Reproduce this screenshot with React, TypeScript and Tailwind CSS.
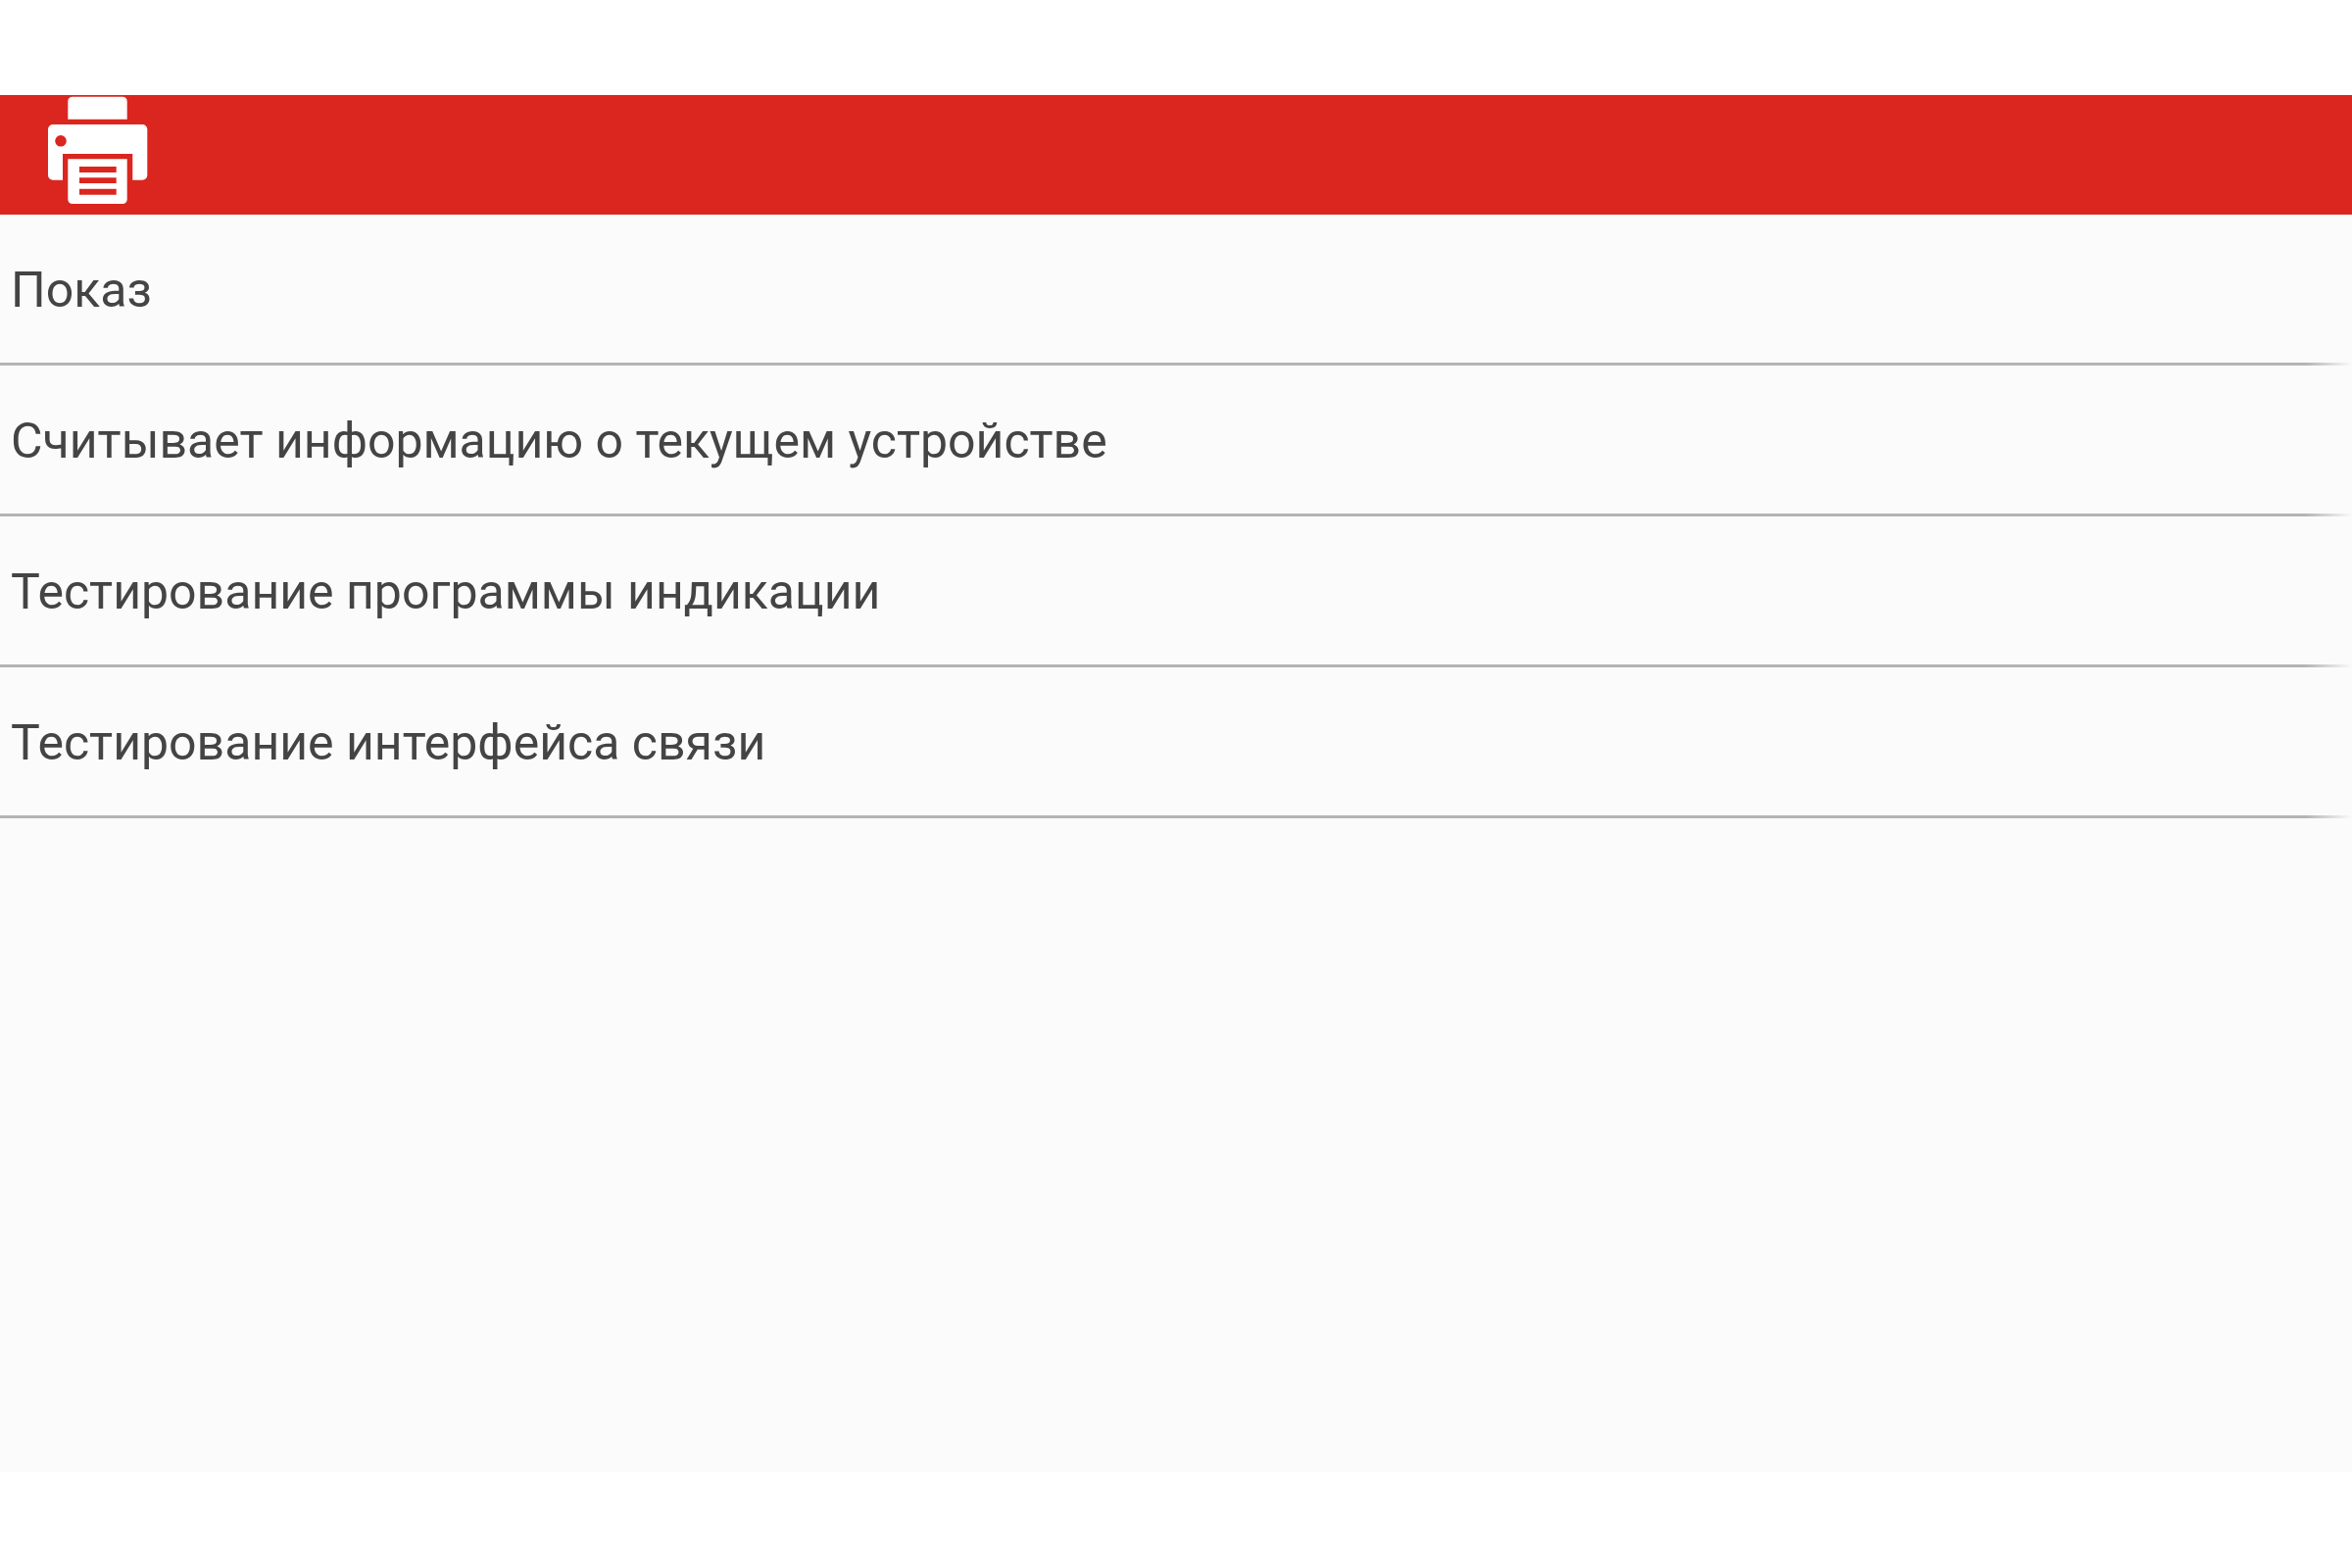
const items = [
  'Показ',
  'Считывает информацию о текущем устройстве',
  'Тестирование программы индикации',
  'Тестирование интерфейса связи',
];

function PrinterIcon() {
  return (
    <svg viewBox="0 0 104 112" className="h-28 w-26" fill="#ffffff" aria-hidden="true">
      <path d="M21.3 24.7V6.2a4.5 4.5 0 0 1 4.5-4.5h51.4a4.5 4.5 0 0 1 4.5 4.5v18.5z" />
      <path
        fillRule="evenodd"
        d="M6 30h91.3a5 5 0 0 1 5 5v46.7a5 5 0 0 1-5 5h-10V60H16v26.7H6a5 5 0 0 1-5-5V35a5 5 0 0 1 5-5zM14 41a5.8 5.8 0 1 0 0 11.6a5.8 5.8 0 1 0 0-11.6z"
      />
      <path
        fillRule="evenodd"
        d="M21.3 65.3h60.4v41.2a4.5 4.5 0 0 1-4.5 4.5H25.8a4.5 4.5 0 0 1-4.5-4.5zM33 73v6h37.7v-6zM33 84.3v5.8h37.7v-5.8zM33 95.7v6h37.7v-6z"
      />
    </svg>
  );
}

export default function App() {
  return (
    <div className="min-h-screen bg-white py-[97px] font-['Roboto',sans-serif]">
      <main className="min-h-[1405px] bg-[#fbfbfb]">
        <header className="flex h-[122px] items-start bg-[#db261f] px-12">
          <PrinterIcon />
        </header>
        <ul>
          {items.map((item) => (
            <li key={item}>
              <button
                type="button"
                className="flex h-[151px] w-full items-center px-[11px] pt-1 text-left text-[50px] text-[#444444]"
              >
                {item}
              </button>
              <div className="h-[3px] bg-linear-to-r from-[#b4b4b4] from-98% to-[#fbfbfb]" />
            </li>
          ))}
        </ul>
      </main>
    </div>
  );
}
